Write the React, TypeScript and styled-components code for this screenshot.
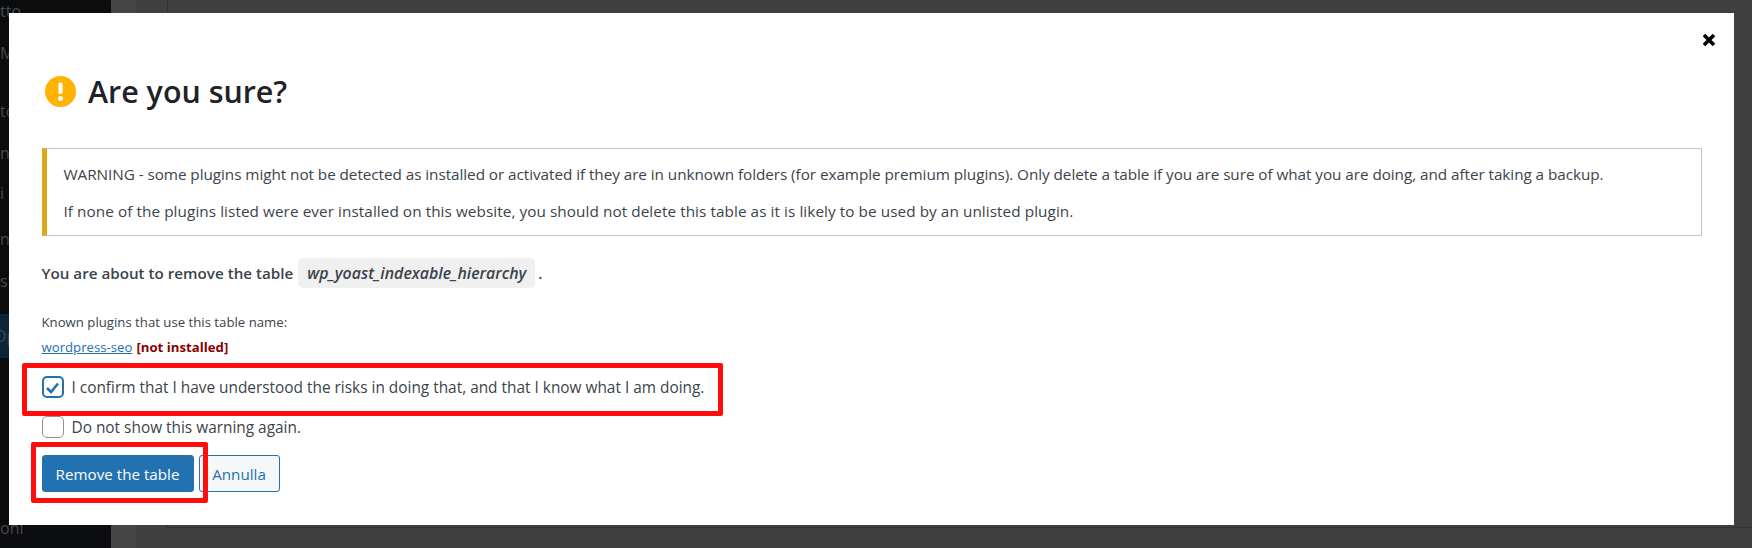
import React from 'react';
import styled, { createGlobalStyle } from 'styled-components';

const GlobalStyle = createGlobalStyle`
  html, body {
    margin: 0;
    padding: 0;
    background: #404040;
  }
  * {
    box-sizing: border-box;
  }
`;

const Page = styled.div`
  position: relative;
  width: 1752px;
  height: 548px;
  overflow: hidden;
  display: flex;
  font-family: 'Open Sans', 'Noto Sans', sans-serif;
  background: #404040;
`;

const Sidebar = styled.div`
  width: 111px;
  background: #0b0c0e;
  display: flex;
  flex-direction: column;
  padding-top: 1px;
`;

const SidebarItem = styled.div<{ $gap: number; $active?: boolean }>`
  margin-top: ${(props) => props.$gap}px;
  height: 20px;
  line-height: 20px;
  font-size: 16px;
  color: #47494c;
  white-space: nowrap;
  text-indent: ${(props) => (props.$active ? '-6px' : '0')};
  background: ${(props) => (props.$active ? '#0d2538' : 'transparent')};
  box-shadow: ${(props) => (props.$active ? '0 -12px 0 #0d2538, 0 12px 0 #0d2538' : 'none')};
`;

const Gutter = styled.div`
  width: 25px;
  background: #454545;
`;

const Main = styled.div`
  flex: 1;
  padding-left: 31px;
  background: #404040;
`;

const Panel = styled.div`
  height: 528px;
  border-left: 1px solid #333;
  border-bottom: 1px solid #333;
`;

const Modal = styled.div`
  position: absolute;
  left: 9px;
  top: 13px;
  width: 1725px;
  height: 512px;
  background: #fff;
  padding: 63px 32px 0 32.5px;
  color: #3c434a;
`;

const CloseButton = styled.button`
  position: absolute;
  top: 19px;
  right: 17px;
  width: 16px;
  height: 16px;
  padding: 0;
  border: 0;
  background: none;
  display: flex;
`;

const Heading = styled.div`
  display: flex;
  align-items: center;
  gap: 12px;
  margin-left: 3.5px;
  height: 30px;
`;

const Title = styled.h1`
  margin: 0;
  font-size: 30.4px;
  font-weight: 600;
  color: #1d2327;
`;

const Warning = styled.div`
  margin-top: 42px;
  height: 88px;
  border: 1px solid #c3c4c7;
  border-left: 5px solid #dba617;
  padding: 2px 16px 0 17px;
  font-size: 15.3px;
  display: flex;
  flex-direction: column;
  justify-content: center;
`;

const WarningLine = styled.div<{ $tracking: number }>`
  height: 37px;
  line-height: 37px;
  white-space: nowrap;
  letter-spacing: ${(props) => props.$tracking}px;
`;

const AboutRow = styled.div`
  margin-top: 22px;
  display: flex;
  align-items: center;
  font-size: 15.2px;
  font-weight: 600;
  height: 30px;
`;

const TableName = styled.code`
  font-family: inherit;
  font-size: 15.9px;
  font-style: italic;
  font-weight: 600;
  background: #f0f0f1;
  border-radius: 5px;
  height: 30px;
  line-height: 30px;
  padding: 0 9px;
  margin: 0 3px 0 5px;
`;

const Known = styled.div`
  margin-top: 22px;
  font-size: 13.2px;
  line-height: 25px;
`;

const PluginLink = styled.a`
  color: #2271b1;
  text-decoration: underline;
`;

const NotInstalled = styled.strong`
  color: #8a0000;
  font-weight: 700;
  margin-left: 4px;
`;

const CheckRow = styled.label<{ $gap: number }>`
  display: flex;
  align-items: center;
  gap: 8px;
  margin-top: ${(props) => props.$gap}px;
  font-size: 15.4px;
  height: 22px;
`;

const Box = styled.span<{ $checked?: boolean }>`
  width: 22px;
  height: 22px;
  border-radius: 5px;
  display: flex;
  align-items: center;
  justify-content: center;
  border: ${(props) => (props.$checked ? '2.5px solid #2271b1' : '1.5px solid #8c8f94')};
`;

const Buttons = styled.div`
  margin-top: 17px;
  display: flex;
  gap: 5px;
`;

const PrimaryButton = styled.button`
  width: 152px;
  height: 37px;
  border: 1px solid #2271b1;
  border-radius: 3px;
  background: #2271b1;
  color: #fff;
  font: inherit;
  font-size: 15.2px;
`;

const SecondaryButton = styled.button`
  width: 81px;
  height: 37px;
  border: 1px solid #2271b1;
  border-radius: 3px;
  background: #f6f7f7;
  color: #2271b1;
  font: inherit;
  font-size: 15.2px;
`;

const Annotation = styled.div<{ $left: number; $top: number; $width: number; $height: number }>`
  position: absolute;
  left: ${(props) => props.$left}px;
  top: ${(props) => props.$top}px;
  width: ${(props) => props.$width}px;
  height: ${(props) => props.$height}px;
  border: 5px solid #ff0d0d;
  border-radius: 2px;
`;

const sidebarItems = [
  { label: 'tto', gap: 0 },
  { label: 'M', gap: 22 },
  { label: 'to', gap: 38 },
  { label: 'n', gap: 22 },
  { label: 'i', gap: 20 },
  { label: 'ne', gap: 26 },
  { label: 'st', gap: 22 },
  { label: 'Op', gap: 35, active: true },
  { label: 'oni', gap: 172 },
];

const App = () => {
  return (
    <Page>
      <GlobalStyle />
      <Sidebar>
        {sidebarItems.map((item) => (
          <SidebarItem key={item.label} $gap={item.gap} $active={item.active}>
            {item.label}
          </SidebarItem>
        ))}
      </Sidebar>
      <Gutter />
      <Main>
        <Panel />
      </Main>
      <Modal>
        <CloseButton>
          <svg width="16" height="16" viewBox="0 0 16 16">
            <path d="M3 3 L13 13 M13 3 L3 13" stroke="#000" strokeWidth="3.6" />
          </svg>
        </CloseButton>
        <Heading>
          <svg width="31" height="31" viewBox="0 0 31 31">
            <circle cx="15.5" cy="15.5" r="15.5" fill="#ffb300" />
            <rect x="13.4" y="6.5" width="4.2" height="11.5" rx="1.5" fill="#fff" />
            <circle cx="15.5" cy="22.5" r="2.5" fill="#fff" />
          </svg>
          <Title>Are you sure?</Title>
        </Heading>
        <Warning>
          <WarningLine $tracking={-0.06}>
            WARNING - some plugins might not be detected as installed or activated if they are in unknown folders (for example premium plugins). Only delete a table if you are sure of what you are doing, and after taking a backup.
          </WarningLine>
          <WarningLine $tracking={0.07}>
            If none of the plugins listed were ever installed on this website, you should not delete this table as it is likely to be used by an unlisted plugin.
          </WarningLine>
        </Warning>
        <AboutRow>
          You are about to remove the table <TableName>wp_yoast_indexable_hierarchy</TableName> .
        </AboutRow>
        <Known>
          <div>Known plugins that use this table name:</div>
          <div>
            <PluginLink>wordpress-seo</PluginLink>
            <NotInstalled>[not installed]</NotInstalled>
          </div>
        </Known>
        <CheckRow $gap={16}>
          <Box $checked>
            <svg width="15" height="15" viewBox="0 0 15 15">
              <path d="M2 8 L6 12 L13 3.5" fill="none" stroke="#2271b1" strokeWidth="2.6" />
            </svg>
          </Box>
          I confirm that I have understood the risks in doing that, and that I know what I am doing.
        </CheckRow>
        <CheckRow $gap={18}>
          <Box />
          Do not show this warning again.
        </CheckRow>
        <Buttons>
          <PrimaryButton>Remove the table</PrimaryButton>
          <SecondaryButton>Annulla</SecondaryButton>
        </Buttons>
      </Modal>
      <Annotation $left={22} $top={363} $width={701} $height={53} />
      <Annotation $left={31} $top={442} $width={177} $height={61} />
    </Page>
  );
};

export default App;
